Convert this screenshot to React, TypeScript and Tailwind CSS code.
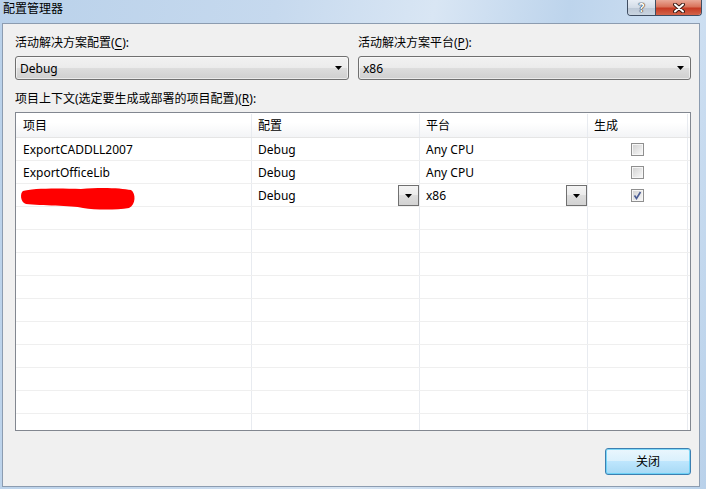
import React from "react";

const ui = "font-['Noto_Sans','Noto_Sans_CJK_SC',sans-serif]";

function Arrow() {
  return (
    <svg width="7" height="4" viewBox="0 0 7 4" className="block">
      <path d="M0 0H7L3.5 4Z" fill="#000" />
    </svg>
  );
}

function Combo({ value }: { value: string }) {
  return (
    <div className="flex h-[24px] items-center rounded-[3px] border border-[#707070] bg-[linear-gradient(to_bottom,#f2f2f2_0%,#ebebeb_50%,#dddddd_50%,#cfcfcf_100%)] pl-[4px] pr-[6px] shadow-[inset_0_0_0_1px_rgba(255,255,255,0.55)]">
      <span className="flex-1 pt-[1px] leading-none">{value}</span>
      <Arrow />
    </div>
  );
}

function DropBtn() {
  return (
    <div className="flex h-[21px] w-[21px] shrink-0 items-center justify-center border border-[#707070] bg-[linear-gradient(to_bottom,#f4f4f4_0%,#ebebeb_50%,#dddddd_50%,#d2d2d2_100%)]">
      <Arrow />
    </div>
  );
}

function Check({ checked }: { checked?: boolean }) {
  return (
    <div className="relative h-[13px] w-[13px] border border-[#8f8f8f] bg-[#f6f6f6] p-[1px]">
      <div className="h-full w-full bg-[linear-gradient(135deg,#d3d3d3_0%,#e8e8e8_60%,#f6f6f6_100%)]" />
      {checked && (
        <svg width="13" height="13" viewBox="0 0 13 13" className="absolute left-[-1px] top-[-1px]">
          <path d="M3.5 6.5L5.5 9.5L9.5 3" fill="none" stroke="#4a5c94" strokeWidth="1.6" />
        </svg>
      )}
    </div>
  );
}

type Row = { name: string; cfg: string; plat: string; build: boolean; active?: boolean };

const rows: Row[] = [
  { name: "ExportCADDLL2007", cfg: "Debug", plat: "Any CPU", build: false },
  { name: "ExportOfficeLib", cfg: "Debug", plat: "Any CPU", build: false },
  { name: "", cfg: "Debug", plat: "x86", build: true, active: true },
];

const cell = "flex h-full shrink-0 border-r border-[#e8ebf0]";

export default function App() {
  const empty = Array.from({ length: 11 });
  return (
    <div
      className={`${ui} flex h-[489px] w-[706px] flex-col overflow-hidden bg-[linear-gradient(100deg,#b9d1ea_0%,#c6d9ee_35%,#d9e6f4_55%,#bdd4ec_72%,#cfe0f2_88%,#b9d1ea_100%)] text-[12px] text-black`}
    >
      {/* title bar */}
      <div className="flex h-[23px] shrink-0 items-start justify-between">
        <span className="pl-[3px] pt-[1px] leading-[16px]">配置管理器</span>
        <div className="mr-[4px] flex h-[16px] overflow-hidden rounded-b-[4px] border border-t-0 border-[#3f4d61]">
          <div className="flex w-[28px] items-center justify-center border-r border-[#3f4d61] bg-[linear-gradient(to_bottom,#e8eef5_0%,#d3dce7_50%,#bcc8d6_51%,#c9d4e0_100%)] text-[12px] font-bold leading-none text-white [text-shadow:0_0_1px_#222,0_0_1px_#222,0_0_1px_#222]">
            ?
          </div>
          <div className="flex w-[45px] items-center justify-center bg-[linear-gradient(to_bottom,#e9a897_0%,#d9735b_45%,#c63b24_55%,#d3644a_100%)]">
            <svg width="12" height="10" viewBox="0 0 12 10">
              <path d="M2 1.5L10 8.5M10 1.5L2 8.5" stroke="#3a1a14" strokeWidth="4" strokeLinecap="round" />
              <path d="M2 1.5L10 8.5M10 1.5L2 8.5" stroke="#fff" strokeWidth="2" strokeLinecap="round" />
            </svg>
          </div>
        </div>
      </div>

      {/* client area */}
      <div className="ml-[2px] flex h-[464px] w-[698px] flex-col border border-[#8c9cb0] bg-[#f0f0f0] pl-[12px] pr-[8px]">
        <div className="mt-[10px] grid grid-cols-[334px_1fr] gap-x-[9px]">
          <div className="h-[17px] leading-[17px]">
            活动解决方案配置(<span className="underline underline-offset-2">C</span>):
          </div>
          <div className="h-[17px] leading-[17px]">
            活动解决方案平台(<span className="underline underline-offset-2">P</span>):
          </div>
          <div className="mt-[5px]">
            <Combo value="Debug" />
          </div>
          <div className="mt-[5px]">
            <Combo value="x86" />
          </div>
        </div>

        <div className="mt-[10px] h-[17px] leading-[17px]">
          项目上下文(选定要生成或部署的项目配置)(<span className="underline underline-offset-2">R</span>):
        </div>

        <div className="mt-[5px] h-[319px] overflow-hidden border border-[#828790] bg-white">
          <div className="flex h-[25px] border-b border-[#e5e5e5] bg-[linear-gradient(to_bottom,#ffffff_0%,#ffffff_40%,#f3f4f6_100%)] pt-[1px]">
            <div className={`${cell} w-[236px] items-center border-[#e5e5e5] pl-[7px]`}>项目</div>
            <div className={`${cell} w-[168px] items-center border-[#e5e5e5] pl-[6px]`}>配置</div>
            <div className={`${cell} w-[168px] items-center border-[#e5e5e5] pl-[6px]`}>平台</div>
            <div className={`${cell} w-[100px] items-center border-[#e5e5e5] pl-[6px]`}>生成</div>
          </div>

          {rows.map((r, i) => (
            <div key={i} className="flex h-[23px] border-b border-[#efefef]">
              <div className={`${cell} w-[236px] items-center pl-[7px]`}>
                {r.active ? (
                  <svg width="114" height="22" viewBox="0 0 114 22" className="ml-[-2px] overflow-visible">
                    <path
                      transform="translate(0 4)"
                      d="M2 3C10 0 40 0 60 1C80 -1 100 0 110 2C115 5 115 17 108 20C95 22 75 22 62 20C50 17 20 18 5 16C-1 14 -1 5 2 3Z"
                      fill="#ff0000"
                    />
                  </svg>
                ) : (
                  <span className="pt-[2px]">{r.name}</span>
                )}
              </div>
              <div className={`${cell} w-[168px] items-end justify-between pl-[6px]`}>
                <span className="self-center pt-[2px]">{r.cfg}</span>
                {r.active && <DropBtn />}
              </div>
              <div className={`${cell} w-[168px] items-end justify-between pl-[6px]`}>
                <span className="self-center pt-[2px]">{r.plat}</span>
                {r.active && <DropBtn />}
              </div>
              <div className={`${cell} w-[100px] items-center justify-center`}>
                <Check checked={r.build} />
              </div>
            </div>
          ))}

          {empty.map((_, i) => (
            <div key={i} className="flex h-[23px] border-b border-[#efefef]">
              <div className={`${cell} w-[236px]`} />
              <div className={`${cell} w-[168px]`} />
              <div className={`${cell} w-[168px]`} />
              <div className={`${cell} w-[100px]`} />
            </div>
          ))}
        </div>

        <div className="mt-[17px] flex justify-end">
          <button
            type="button"
            className="flex h-[27px] w-[86px] items-center justify-center rounded-[3px] border border-[#3c7fb1] bg-[linear-gradient(to_bottom,#eaf6fd_0%,#d9f0fc_50%,#bee6fd_50%,#a7d9f5_100%)] text-[12px] leading-none text-black shadow-[inset_0_0_0_1px_rgba(90,205,245,0.75)]"
          >
            关闭
          </button>
        </div>
      </div>
    </div>
  );
}
